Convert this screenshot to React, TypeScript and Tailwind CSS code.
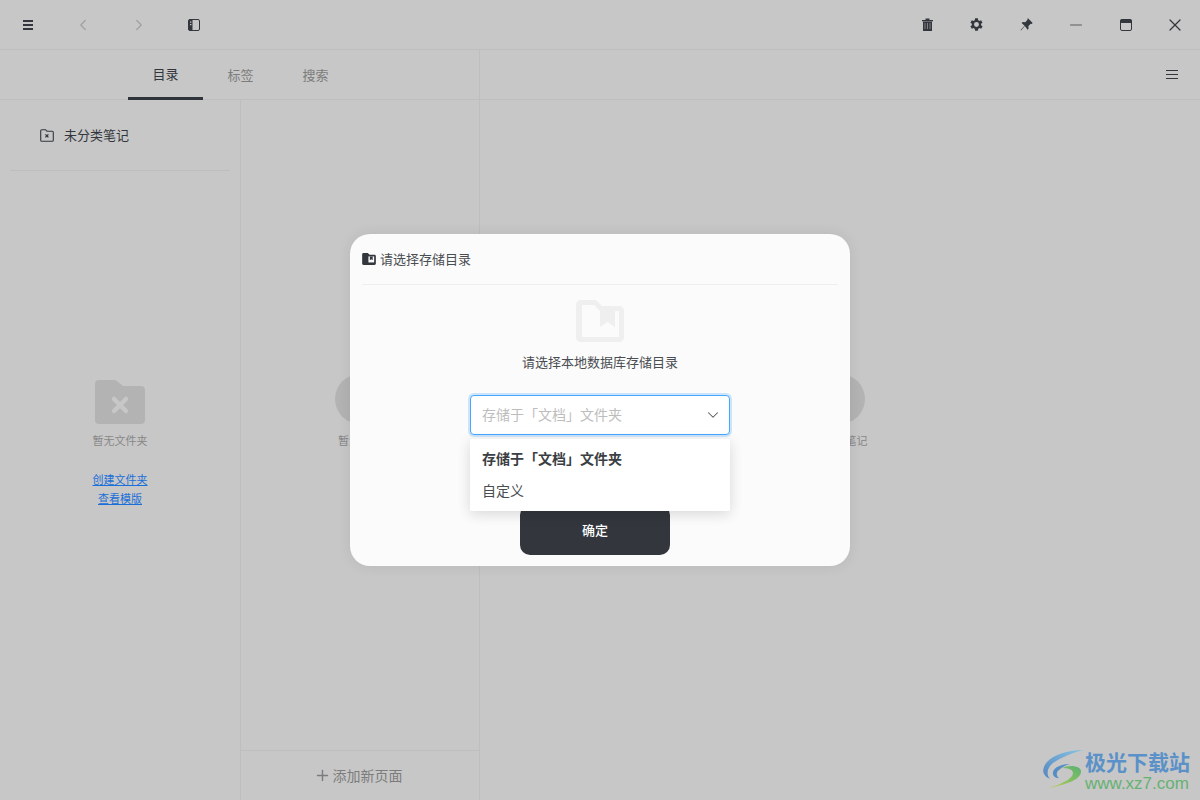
import { ChevronLeft, ChevronRight, X, Minus, Plus, ChevronDown } from 'lucide-react';

const cjk = { fontFamily: '"Noto Sans CJK SC", "Noto Sans", sans-serif' };

function MenuBars({ width, thick, gap }: { width: number; thick: number; gap: number }) {
  return (
    <div className="flex flex-col" style={{ gap }}>
      <div className="bg-[#33373d]" style={{ width, height: thick }} />
      <div className="bg-[#33373d]" style={{ width, height: thick }} />
      <div className="bg-[#33373d]" style={{ width, height: thick }} />
    </div>
  );
}

function SidebarIcon() {
  return (
    <svg width="12" height="12" viewBox="0 0 12 12">
      <rect x="0.5" y="0.5" width="11" height="11" rx="1.5" fill="none" stroke="#33373d" />
      <rect x="0.5" y="0.5" width="4" height="11" rx="1" fill="#33373d" />
      <rect x="2" y="2.5" width="1.4" height="1.2" fill="#c7c7c7" />
      <rect x="2" y="5" width="1.4" height="1.2" fill="#c7c7c7" />
    </svg>
  );
}

function TrashIcon() {
  return (
    <svg width="11" height="13" viewBox="0 0 11 13">
      <path d="M0 2h11v1.2H0zM3.500 0.4h4v1.6h-4z" fill="#33373d" />
      <path d="M1 3.500h9v9.500H1z" fill="#33373d" />
      <path d="M3 5v6M5.500 5v6M8 5v6" stroke="#8b8b8b" strokeWidth="0.9" />
    </svg>
  );
}

function GearIcon() {
  return (
    <svg width="17" height="17" viewBox="0 0 24 24">
      <path
        d="M19.400 13a7.600 7.600 0 0 0 0-2l2.100-1.600-2-3.500-2.500 1a7.400 7.400 0 0 0-1.700-1L15 3.200h-4l-.4 2.700a7.400 7.400 0 0 0-1.700 1l-2.500-1-2 3.500L6.500 11a7.600 7.600 0 0 0 0 2l-2.100 1.600 2 3.500 2.500-1c.5.4 1.100.7 1.700 1l.4 2.700h4l.4-2.700c.6-.3 1.200-.6 1.700-1l2.500 1 2-3.500zM13 15.500a3.500 3.500 0 1 1 0-7 3.500 3.500 0 0 1 0 7z"
        fill="#33373d"
        transform="translate(-1 0)"
      />
    </svg>
  );
}

function PinIcon() {
  return (
    <svg width="13" height="13" viewBox="0 0 13 13">
      <path d="M8 0.3l4.700 4.700-1.100 1-.8-.3-2.400 2.400.2 2.600-1 1L4.900 8.100 1 12.400.6 12l4-4.200-3-2.800 1-1 2.600.2 2.400-2.400-.3-.8z" fill="#33373d" />
    </svg>
  );
}

function WindowIcon() {
  return (
    <svg width="12" height="12" viewBox="0 0 12 12">
      <rect x="0.5" y="0.5" width="11" height="11" rx="1.5" fill="none" stroke="#33373d" />
      <rect x="0.5" y="0.5" width="11" height="3.500" fill="#33373d" />
    </svg>
  );
}

function FolderX({ size, color, cross }: { size: number; color: string; cross: string }) {
  return (
    <svg width={size} height={size * 0.88} viewBox="0 0 50 44">
      <path d="M4 0h15c1.500 0 2.500.5 3.500 1.500L28 6h18c2.500 0 4 1.500 4 4v30c0 2.500-1.500 4-4 4H4c-2.500 0-4-1.500-4-4V4c0-2.500 1.500-4 4-4z" fill={color} />
      <path d="M19 19l12 12M31 19L19 31" stroke={cross} strokeWidth="4.500" strokeLinecap="round" />
    </svg>
  );
}

function SmallFolderX() {
  return (
    <svg width="14" height="13" viewBox="0 0 14 13">
      <path d="M1.800.7h3.700l1.500 1.500h5.200c.6 0 1.100.5 1.100 1.100v7.900c0 .6-.5 1.100-1.100 1.100H1.800c-.6 0-1.100-.5-1.100-1.100V1.800c0-.6.5-1.100 1.100-1.100z" fill="none" stroke="#33373d" strokeWidth="1.100" />
      <path d="M5.400 5.400l3 3M8.400 5.400l-3 3" stroke="#33373d" strokeWidth="1.300" />
    </svg>
  );
}

const folderOutline =
  'M5 0h13c1.500 0 2.500.5 3.500 1.500L26 6h17c3 0 5 2 5 5v26c0 3-2 5-5 5H5c-3 0-5-2-5-5V5c0-3 2-5 5-5z';

function TitleFolder() {
  return (
    <svg width="14" height="12" viewBox="0 0 48 42">
      <path d={folderOutline} fill="#33373d" />
      <path d="M22 12h20v21H22z" fill="#fbfbfb" />
      <path d="M27 12h10v13l-5-3.500-5 3.500z" fill="#33373d" />
    </svg>
  );
}

function BigFolder() {
  return (
    <svg width="48" height="42" viewBox="0 0 48 42">
      <path d={folderOutline} fill="#efefef" />
      <path d="M6 5h12l6 6v16l7.500-5 7.500 5V11h4v26H6z" fill="#fbfbfb" />
    </svg>
  );
}

function Watermark() {
  return (
    <div className="absolute left-[1040px] top-[748px] flex opacity-90">
      <svg width="48" height="44" viewBox="0 0 48 44" className="mr-[-3px]">
        <defs>
          <linearGradient id="wm-green" x1="1" y1="0" x2="0" y2="1">
            <stop offset="0" stopColor="#4fb06a" />
            <stop offset="0.6" stopColor="#8cc350" />
            <stop offset="1" stopColor="#e0d050" />
          </linearGradient>
          <linearGradient id="wm-blue" x1="1" y1="0" x2="0" y2="1">
            <stop offset="0" stopColor="#7fc3e6" />
            <stop offset="1" stopColor="#4a7fc0" />
          </linearGradient>
        </defs>
        <path d="M43 2C30 2 14 6 7 14 2 20 1 27 10 31 6 26 7 20 13 15 20 10 32 5 43 2z" fill="url(#wm-blue)" />
        <path d="M30 16C22 16 14 19 13 24 12.500 28 15 30 19 30 16 28 16 24 19 22 22 19 26 17 30 16z" fill="#4a87c4" />
        <path d="M22 20C30 16 42 18 41 24 40 32 28 36 5 41 20 37 33 31 33 25 33 21 27 20 22 20z" fill="url(#wm-green)" />
      </svg>
      <div className="flex flex-col pt-[1px]">
        <div className="text-[21px] leading-[24px] font-bold text-[#4f8cc9]" style={cjk}>
          极光下载站
        </div>
        <div className="mt-[2px] text-[17px] leading-[18px] text-[#5bb06a] font-['Liberation_Sans',sans-serif]">www.xz7.com</div>
      </div>
    </div>
  );
}

export default function App() {
  return (
    <div className="relative w-[1200px] h-[800px] overflow-hidden bg-[#c7c7c7] text-[#33373d]" style={cjk}>
      {/* Title bar */}
      <div className="flex h-[50px] items-center justify-between border-b border-[#bebebe] pl-[3px]">
        <div className="flex items-center">
          <div className="flex h-[50px] w-[50px] items-center justify-center">
            <MenuBars width={10} thick={2} gap={2} />
          </div>
          <div className="flex h-[50px] w-[60px] items-center justify-center">
            <ChevronLeft size={18} color="#a0a0a0" strokeWidth={1.600} />
          </div>
          <div className="flex h-[50px] w-[52px] items-center justify-center">
            <ChevronRight size={18} color="#a0a0a0" strokeWidth={1.600} />
          </div>
          <div className="flex h-[50px] w-[58px] items-center justify-center">
            <SidebarIcon />
          </div>
        </div>
        <div className="flex items-center">
          <div className="flex h-[50px] w-[50px] items-center justify-center"><TrashIcon /></div>
          <div className="flex h-[50px] w-[49px] items-center justify-center"><GearIcon /></div>
          <div className="flex h-[50px] w-[50px] items-center justify-center"><PinIcon /></div>
          <div className="flex h-[50px] w-[50px] items-center justify-center"><Minus size={18} color="#808080" strokeWidth={2.200} /></div>
          <div className="flex h-[50px] w-[49px] items-center justify-center"><WindowIcon /></div>
          <div className="flex h-[50px] w-[50px] items-center justify-center"><X size={20} strokeWidth={1.500} /></div>
        </div>
      </div>

      <div className="flex h-[750px]">
        {/* Left panel */}
        <div className="flex w-[480px] flex-col border-r border-[#bebebe]">
          <div className="flex h-[50px] border-b border-[#bebebe] pl-[128px] text-[13px]">
            <div className="flex h-[50px] w-[75px] items-center justify-center border-b-[3px] border-[#2f333a] text-[#33373d]">目录</div>
            <div className="flex h-[49px] w-[75px] items-center justify-center text-[#7c7c7c]">标签</div>
            <div className="flex h-[49px] w-[75px] items-center justify-center text-[#7c7c7c]">搜索</div>
          </div>
          <div className="flex flex-1">
            <div className="flex w-[241px] flex-col border-r border-[#bebebe]">
              <div className="mx-[10px] flex h-[71px] items-center gap-[10px] border-b border-[#bebebe] pl-[30px] text-[13px]">
                <SmallFolderX />
                <span>未分类笔记</span>
              </div>
              <div className="mt-[209px] flex flex-col items-center">
                <FolderX size={50} color="#b3b3b3" cross="#c7c7c7" />
                <div className="mt-[8px] text-[11px] leading-[16px] text-[#878787]">暂无文件夹</div>
                <div className="mt-[23px] text-[11px] leading-[16px] text-[#1a6fd8] underline">创建文件夹</div>
                <div className="mt-[3px] text-[11px] leading-[16px] text-[#1a6fd8] underline">查看模版</div>
              </div>
            </div>
            <div className="flex w-[238px] flex-col">
              <div className="flex flex-1 flex-col items-center pt-[274px]">
                <div className="h-[50px] w-[50px] rounded-full bg-[#b3b3b3]" />
                <div className="mt-[8px] text-[11px] leading-[16px] text-[#878787]">暂无笔记</div>
              </div>
              <div className="flex h-[50px] items-center justify-center gap-[2px] border-t border-[#bebebe] text-[14px] text-[#7c7c7c]">
                <Plus size={17} className="-ml-[4px]" />
                <span>添加新页面</span>
              </div>
            </div>
          </div>
        </div>

        {/* Right panel */}
        <div className="flex flex-1 flex-col">
          <div className="flex h-[50px] items-center justify-end border-b border-[#bebebe] pr-[22px]">
            <MenuBars width={12} thick={1.500} gap={2.500} />
          </div>
          <div className="flex flex-col items-center pt-[274px]">
            <div className="h-[50px] w-[50px] rounded-full bg-[#b3b3b3]" />
            <div className="mt-[8px] text-[11px] leading-[16px] text-[#878787]">未选择笔记</div>
          </div>
        </div>
      </div>

      <Watermark />

      {/* Dialog */}
      <div className="absolute left-[350px] top-[234px] h-[332px] w-[500px] rounded-[20px] bg-[#fbfbfb] px-[12px] shadow-[0_0_14px_rgba(0,0,0,0.08)]">
        <div className="flex h-[51px] items-center gap-[4px] border-b border-[#eeeeee] text-[13px] text-[#4a4d52]">
          <TitleFolder />
          <span>请选择存储目录</span>
        </div>
        <div className="flex flex-col items-center">
          <div className="mt-[15px]">
            <BigFolder />
          </div>
          <div className="mt-[10px] text-[13px] leading-[20px] text-[#4a4d52]">请选择本地数据库存储目录</div>
          <div className="mt-[23px] flex h-[40px] w-[260px] items-center justify-between rounded-[4px] border border-[#47a6ff] bg-white pl-[11px] pr-[7px] text-[14px] text-[#bdbdbd] shadow-[0_0_0_2px_rgba(24,144,255,0.2)]">
            <span className="pb-[2px]">存储于「文档」文件夹</span>
            <ChevronDown size={18} color="#55585c" strokeWidth={1.400} />
          </div>
          <div className="mt-[70px] ml-[-10px] flex h-[50px] w-[150px] items-center justify-center rounded-[10px] bg-[#33373d] text-[13px] font-medium text-white">
            确定
          </div>
        </div>
      </div>

      {/* Select dropdown */}
      <div className="absolute left-[470px] top-[439px] h-[72px] w-[260px] rounded-[2px] bg-white pt-[3px] text-[14px] shadow-[0_3px_14px_rgba(0,0,0,0.14)]">
        <div className="flex h-[32px] items-center pl-[12px] font-bold text-[#3b3e43]">存储于「文档」文件夹</div>
        <div className="flex h-[32px] items-center pl-[12px] text-[#4a4d52]">自定义</div>
      </div>
    </div>
  );
}
